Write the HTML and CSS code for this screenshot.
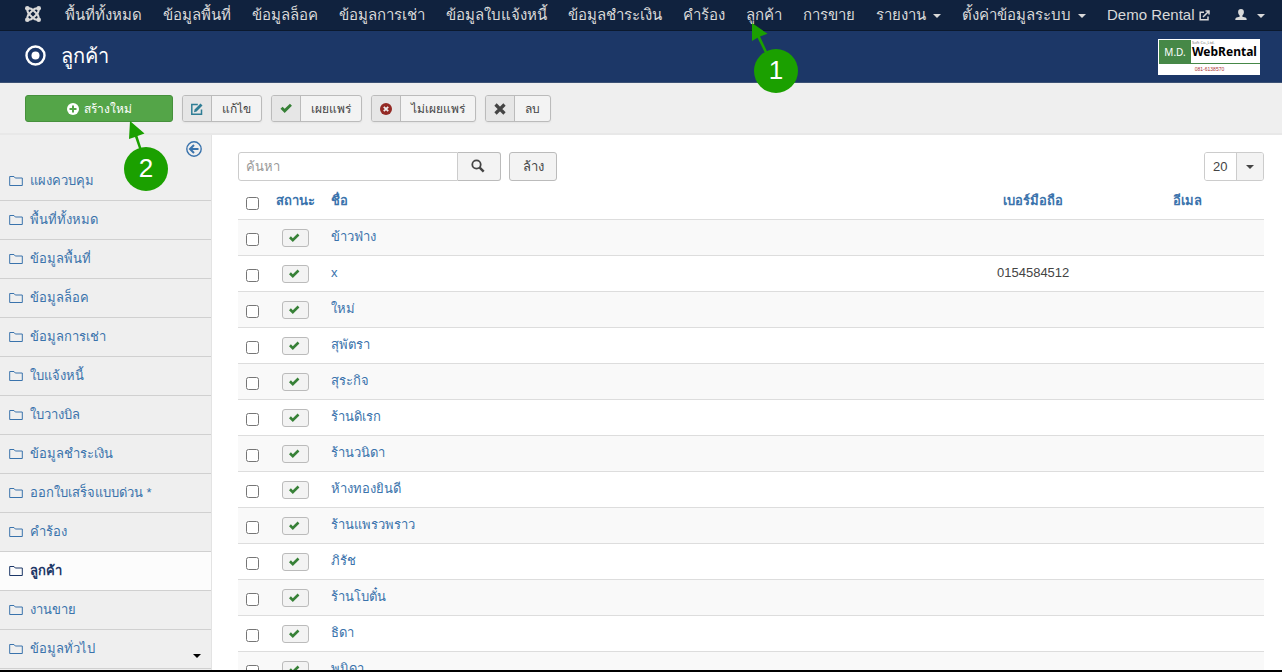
FILE: index.html
```html
<!DOCTYPE html>
<html lang="th">
<head>
<meta charset="utf-8">
<title>ลูกค้า - Demo Rental</title>
<link rel="stylesheet" href="styles.css">
</head>
<body>
<svg class="defs" aria-hidden="true">
  <symbol id="check" viewBox="0 0 12 10"><path d="M1 5.2 2.9 3.3 4.8 5.2 9.6.6 11.4 2.4 4.8 9Z"/></symbol>
  <symbol id="folder" viewBox="0 0 14 12"><path d="M.7 10.500V1.500H5l1.300 1.500h7v7.500Z" fill="none" stroke="currentColor"/></symbol>
  <symbol id="caret" viewBox="0 0 8 4"><path d="M0 0h8L4 4Z"/></symbol>
</svg>
<div class="page">
  <nav class="navbar">
    <a class="brand" href="#" aria-label="Joomla"><svg width="16" height="16" viewBox="0 0 16 16"><g fill="none" stroke="currentColor" stroke-width="2"><path d="M2.500 2.500C2 5.500 2.500 6.500 4 8l4 4c1.500 1.500 3 2 5.500 1.500"/><path d="M13.500 2.500C10.500 2 9.500 2.500 8 4L4 8c-1.500 1.500-2 3-1.500 5.500"/><path d="M2.500 2.500C5.500 2 6.500 2.500 8 4l4 4c1.500 1.500 2 3 1.500 5.500"/><path d="M13.500 2.500C14 5.500 13.500 6.500 12 8l-4 4c-1.500 1.500-3 2-5.500 1.500"/></g><circle cx="2.300" cy="2.300" r="2.300"/><circle cx="13.700" cy="2.300" r="2.300"/><circle cx="2.300" cy="13.700" r="2.300"/><circle cx="13.700" cy="13.700" r="2.300"/></svg></a>
    <a href="#">พื้นที่ทั้งหมด</a>
    <a href="#">ข้อมูลพื้นที่</a>
    <a href="#">ข้อมูลล็อค</a>
    <a href="#">ข้อมูลการเช่า</a>
    <a href="#">ข้อมูลใบแจ้งหนี้</a>
    <a href="#">ข้อมูลชำระเงิน</a>
    <a href="#">คำร้อง</a>
    <a href="#">ลูกค้า</a>
    <a href="#">การขาย</a>
    <a href="#">รายงาน<svg class="caret"><use href="#caret"/></svg></a>
    <a href="#">ตั้งค่าข้อมูลระบบ<svg class="caret"><use href="#caret"/></svg></a>
    <a href="#">Demo Rental<svg class="ext" width="11" height="11" viewBox="0 0 11 11"><path d="M5 2.200H1.200v7.600H9V6.500M4 7l5.500-5.500M6.500 1H10v3.500" fill="none" stroke="currentColor" stroke-width="1.500"/></svg></a>
    <a href="#" class="user" aria-label="User"><svg width="12" height="12" viewBox="0 0 12 12"><path d="M6 0c1.900 0 2.900 1.300 2.900 3 0 1.500-.6 2.700-1.500 3.400v1.300l3 .9c.8.3 1.300.8 1.300 2.400H.3c0-1.600.5-2.100 1.300-2.400l3-.9V6.400C3.700 5.700 3.100 4.500 3.100 3 3.100 1.300 4.100 0 6 0Z"/></svg><svg class="caret"><use href="#caret"/></svg></a>
  </nav>

  <header class="header">
    <svg width="21" height="21" viewBox="0 0 21 21"><circle cx="10.500" cy="10.500" r="9" fill="none" stroke="currentColor" stroke-width="2.400"/><circle cx="10.500" cy="10.500" r="4"/></svg>
    <h1>ลูกค้า</h1>
    <div class="logo">
      <div class="logo-top"><span class="logo-md">M.D.</span><span class="logo-name"><small>Soft Co.,Ltd.</small><b>WebRental</b></span></div>
      <div class="logo-phone">081-6138570</div>
    </div>
  </header>

  <div class="toolbar">
    <button class="btn-new"><svg width="12" height="12" viewBox="0 0 12 12"><circle cx="6" cy="6" r="6"/><path d="M6 2.500v7M2.500 6h7" stroke="#54a548" stroke-width="2"/></svg>สร้างใหม่</button>
    <button class="tool"><span class="tool-icon teal"><svg width="12" height="12" viewBox="0 0 12 12"><path d="M10.500 6.500v4.700H.8V1.500h6" fill="none" stroke="currentColor" stroke-width="1.500"/><path d="M3 9.200 3.600 6.500 9.500.6l2 2L5.600 8.500Z"/></svg></span><span class="tool-text">แก้ไข</span></button>
    <button class="tool"><span class="tool-icon green"><svg width="14" height="11"><use href="#check"/></svg></span><span class="tool-text">เผยแพร่</span></button>
    <button class="tool"><span class="tool-icon red"><svg width="12" height="12" viewBox="0 0 12 12"><circle cx="6" cy="6" r="6"/><path d="m3.800 3.800 4.400 4.400m0-4.400L3.800 8.200" stroke="#eee" stroke-width="1.800"/></svg></span><span class="tool-text">ไม่เผยแพร่</span></button>
    <button class="tool"><span class="tool-icon"><svg width="12" height="12" viewBox="0 0 12 12"><path d="m1.500 1.500 9 9m0-9-9 9" stroke="currentColor" stroke-width="3.200"/></svg></span><span class="tool-text">ลบ</span></button>
  </div>

  <div class="body">
    <aside class="sidebar">
      <button class="collapse" aria-label="ซ่อนเมนู"><svg class="outline" width="16" height="16" viewBox="0 0 16 16"><circle cx="8" cy="8" r="7.200" stroke-width="1.400"/><path d="M12.500 8H4.500M8 4 4 8l4 4" stroke-width="2"/></svg></button>
      <ul>
        <li><a href="#"><svg><use href="#folder"/></svg>แผงควบคุม</a></li>
        <li><a href="#"><svg><use href="#folder"/></svg>พื้นที่ทั้งหมด</a></li>
        <li><a href="#"><svg><use href="#folder"/></svg>ข้อมูลพื้นที่</a></li>
        <li><a href="#"><svg><use href="#folder"/></svg>ข้อมูลล็อค</a></li>
        <li><a href="#"><svg><use href="#folder"/></svg>ข้อมูลการเช่า</a></li>
        <li><a href="#"><svg><use href="#folder"/></svg>ใบแจ้งหนี้</a></li>
        <li><a href="#"><svg><use href="#folder"/></svg>ใบวางบิล</a></li>
        <li><a href="#"><svg><use href="#folder"/></svg>ข้อมูลชำระเงิน</a></li>
        <li><a href="#"><svg><use href="#folder"/></svg>ออกใบเสร็จแบบด่วน *</a></li>
        <li><a href="#"><svg><use href="#folder"/></svg>คำร้อง</a></li>
        <li class="active"><a href="#"><svg><use href="#folder"/></svg>ลูกค้า</a></li>
        <li><a href="#"><svg><use href="#folder"/></svg>งานขาย</a></li>
        <li><a href="#"><svg><use href="#folder"/></svg>ข้อมูลทั่วไป</a></li>
      </ul>
      <svg class="more"><use href="#caret"/></svg>
    </aside>

    <main class="content">
      <div class="filters">
        <div class="search">
          <input type="text" placeholder="ค้นหา" aria-label="ค้นหา">
          <button aria-label="ค้นหา"><svg class="outline" width="14" height="14" viewBox="0 0 14 14"><circle cx="5.500" cy="5.500" r="4.200" stroke-width="1.800"/><path d="m8.700 8.700 4 4" stroke-width="2.500"/></svg></button>
        </div>
        <button class="clear">ล้าง</button>
        <div class="limit"><select aria-label="จำนวนรายการ"><option>20</option></select><span class="limit-arrow"><svg class="caret"><use href="#caret"/></svg></span></div>
      </div>
      <table>
        <thead><tr><th class="c-check"><input type="checkbox" aria-label="เลือกทั้งหมด"></th><th class="c-status"><a href="#">สถานะ</a></th><th class="c-name"><a href="#">ชื่อ</a></th><th class="c-info"><a href="#">เบอร์มือถือ</a></th><th class="c-info"><a href="#">อีเมล</a></th></tr></thead>
        <tbody>
          <tr><td><input type="checkbox" aria-label="ข้าวฟ่าง"></td><td><button class="state" aria-label="เผยแพร่"><svg><use href="#check"/></svg></button></td><td><a href="#">ข้าวฟ่าง</a></td><td></td><td></td></tr>
          <tr><td><input type="checkbox" aria-label="x"></td><td><button class="state" aria-label="เผยแพร่"><svg><use href="#check"/></svg></button></td><td><a href="#">x</a></td><td>0154584512</td><td></td></tr>
          <tr><td><input type="checkbox" aria-label="ใหม่"></td><td><button class="state" aria-label="เผยแพร่"><svg><use href="#check"/></svg></button></td><td><a href="#">ใหม่</a></td><td></td><td></td></tr>
          <tr><td><input type="checkbox" aria-label="สุพัตรา"></td><td><button class="state" aria-label="เผยแพร่"><svg><use href="#check"/></svg></button></td><td><a href="#">สุพัตรา</a></td><td></td><td></td></tr>
          <tr><td><input type="checkbox" aria-label="สุระกิจ"></td><td><button class="state" aria-label="เผยแพร่"><svg><use href="#check"/></svg></button></td><td><a href="#">สุระกิจ</a></td><td></td><td></td></tr>
          <tr><td><input type="checkbox" aria-label="ร้านดิเรก"></td><td><button class="state" aria-label="เผยแพร่"><svg><use href="#check"/></svg></button></td><td><a href="#">ร้านดิเรก</a></td><td></td><td></td></tr>
          <tr><td><input type="checkbox" aria-label="ร้านวนิดา"></td><td><button class="state" aria-label="เผยแพร่"><svg><use href="#check"/></svg></button></td><td><a href="#">ร้านวนิดา</a></td><td></td><td></td></tr>
          <tr><td><input type="checkbox" aria-label="ห้างทองยินดี"></td><td><button class="state" aria-label="เผยแพร่"><svg><use href="#check"/></svg></button></td><td><a href="#">ห้างทองยินดี</a></td><td></td><td></td></tr>
          <tr><td><input type="checkbox" aria-label="ร้านแพรวพราว"></td><td><button class="state" aria-label="เผยแพร่"><svg><use href="#check"/></svg></button></td><td><a href="#">ร้านแพรวพราว</a></td><td></td><td></td></tr>
          <tr><td><input type="checkbox" aria-label="ภิรัช"></td><td><button class="state" aria-label="เผยแพร่"><svg><use href="#check"/></svg></button></td><td><a href="#">ภิรัช</a></td><td></td><td></td></tr>
          <tr><td><input type="checkbox" aria-label="ร้านโบตั๋น"></td><td><button class="state" aria-label="เผยแพร่"><svg><use href="#check"/></svg></button></td><td><a href="#">ร้านโบตั๋น</a></td><td></td><td></td></tr>
          <tr><td><input type="checkbox" aria-label="ธิดา"></td><td><button class="state" aria-label="เผยแพร่"><svg><use href="#check"/></svg></button></td><td><a href="#">ธิดา</a></td><td></td><td></td></tr>
          <tr><td><input type="checkbox" aria-label="พนิดา"></td><td><button class="state" aria-label="เผยแพร่"><svg><use href="#check"/></svg></button></td><td><a href="#">พนิดา</a></td><td></td><td></td></tr>
        </tbody>
      </table>
    </main>
  </div>

  <div class="step step-1"><svg width="16" height="32" viewBox="0 0 16 32"><path d="M0 0v18l5.500-3.300L12.500 29h2.800L8 13.500l7.500-2.800Z"/></svg><span>1</span></div>
  <div class="step step-2"><svg width="16" height="32" viewBox="0 0 16 32"><path d="M1 0 0 18l6-2 4.500 13H13L8.500 15l7-2.500Z"/></svg><span>2</span></div>
</div>
</body>
</html>
```
FILE: styles.css
```css
* { box-sizing: border-box; }
body {
  margin: 0;
  font: 13px/18px "Liberation Sans", sans-serif;
  color: #444;
  background: #fff;
}
a { color: #3a73ac; text-decoration: none; }
button, input, select { font: inherit; color: inherit; margin: 0; }
svg { fill: currentColor; flex: none; }
.outline { fill: none; stroke: currentColor; }
.defs { position: absolute; width: 0; height: 0; }
.caret { width: 8px; height: 4px; }

.page {
  position: relative;
  height: 100vh;
  display: flex;
  flex-direction: column;
  overflow: hidden;
  border-bottom: 2px solid #000;
}

.navbar {
  flex: none;
  height: 31px;
  display: flex;
  align-items: stretch;
  gap: 1px;
  padding: 0 7px 0 15px;
  background: #10223e;
  border-bottom: 1px solid #0b192e;
  font-size: 15px;
  line-height: 30px;
}
.navbar a {
  display: flex;
  align-items: center;
  padding: 0 10px;
  color: #d9d9d9;
  white-space: nowrap;
}
.navbar .brand { padding: 0 13px 2px 10px; }
.navbar .caret { margin: 2px 0 0 7px; }
.navbar .ext { margin-left: 4px; }
.navbar .user { margin-left: auto; }
.navbar .user .caret { margin-left: 10px; }

.header {
  flex: none;
  height: 52px;
  display: flex;
  align-items: center;
  padding: 0 22px 2px 25px;
  gap: 15px;
  color: #fff;
  background: #1c3767;
  border-bottom: 1px solid #3b5175;
}
.header h1 { margin: 0; font-size: 20px; line-height: 36px; font-weight: 400; }
.logo {
  width: 102px;
  height: 36px;
  margin: 2px 0 0 auto;
  padding: 1px 0 0 1px;
  background: #fff;
  color: #000;
  font-family: "Noto Sans", sans-serif;
}
.logo-top { display: flex; height: 24px; border-bottom: 1px solid #468847; }
.logo-md { width: 32px; background: #468847; color: #fff; font-size: 10px; line-height: 24px; text-align: center; }
.logo-name { display: flex; flex-direction: column; padding-left: 1px; }
.logo-name small { font-size: 4px; line-height: 6px; color: #777; }
.logo-name b { font-size: 12px; line-height: 12px; }
.logo-phone { font: 5px/10px "Liberation Sans", sans-serif; text-align: center; color: #a33; }

.toolbar {
  flex: none;
  display: flex;
  gap: 9px;
  height: 52px;
  padding: 12px 25px;
  background: #efefef;
  border-bottom: 2px solid #e8e8e8;
  font-size: 12px;
}
.toolbar button {
  display: flex;
  align-items: center;
  height: 27px;
  padding: 0;
  border: 1px solid #bbb;
  border-radius: 3px;
  overflow: hidden;
}
.toolbar .btn-new {
  width: 148px;
  justify-content: center;
  gap: 5px;
  color: #fff;
  background: #54a548;
  border-color: #46903c;
}
.toolbar .tool { background: #f3f3f3; box-shadow: 0 1px 2px rgba(0,0,0,.05); }
.tool-icon {
  align-self: stretch;
  width: 29px;
  display: flex;
  align-items: center;
  justify-content: center;
  background: #e6e6e6;
  border-right: 1px solid #bbb;
}
.tool-text { padding: 0 10px; white-space: nowrap; }
.teal { color: #2f7d95; }
.green { color: #378137; }
.red { color: #942a25; }

.body { flex: 1; min-height: 0; display: flex; }
.sidebar {
  position: relative;
  flex: none;
  width: 212px;
  background: #efefef;
  border-right: 1px solid #e3e3e3;
  overflow: hidden;
}
.collapse {
  display: block;
  margin: 6px 9px 5px auto;
  padding: 0;
  height: 16px;
  border: 0;
  background: none;
  color: #3a73ac;
}
.collapse svg { display: block; }
.sidebar ul { list-style: none; margin: 0; padding: 0; }
.sidebar a {
  display: flex;
  align-items: center;
  gap: 7px;
  height: 39px;
  padding: 0 0 1px 9px;
  border-bottom: 1px solid #d0d0d0;
}
.sidebar a svg { width: 14px; height: 12px; }
.sidebar .active a { background: #fcfcfc; color: #1c3767; font-weight: 700; }
.sidebar .more { position: absolute; right: 10px; bottom: 12px; width: 8px; height: 4px; color: #000; }

.content { flex: 1; min-width: 0; padding: 17px 18px 0 26px; overflow: hidden; }
.filters { display: flex; gap: 8px; height: 29px; }
.search { display: flex; }
.search input {
  width: 220px;
  padding: 0 7px;
  border: 1px solid #ccc;
  border-radius: 3px 0 0 3px;
}
.search input::placeholder { color: #999; }
.filters button {
  border: 1px solid #bbb;
  background: #f3f3f3;
  border-radius: 3px;
}
.filters .search button {
  display: flex;
  align-items: center;
  justify-content: center;
  width: 43px;
  padding: 0 3px 2px 0;
  border-left-width: 0;
  border-radius: 0 3px 3px 0;
}
.filters .clear { width: 48px; padding: 0; }
.limit {
  display: flex;
  width: 60px;
  margin-left: auto;
  border: 1px solid #ccc;
  border-radius: 3px;
  overflow: hidden;
}
.limit select { appearance: none; width: 31px; padding: 0 0 0 8px; border: 0; background: #fff; }
.limit-arrow {
  flex: 1;
  display: flex;
  align-items: center;
  justify-content: center;
  background: #f3f3f3;
  border-left: 1px solid #ccc;
}

table { width: 100%; margin-top: 1px; border-collapse: collapse; table-layout: fixed; }
th, td { height: 36px; padding: 8px; border-top: 1px solid #ddd; text-align: center; vertical-align: top; line-height: 18px; }
th { height: 37px; border-top: 0; padding-top: 10px; }
th:nth-child(3), td:nth-child(3) { text-align: left; }
.c-check { width: 29px; }
.c-status { width: 56px; }
.c-info { width: 15%; }
tbody tr:nth-child(odd) { background: #f9f9f9; }
table input { display: block; width: 13px; height: 13px; margin: 5px 0 0; }
th a { white-space: nowrap; }
th:nth-child(2), td:nth-child(2) { padding-left: 0; padding-right: 0; }
.state {
  display: flex;
  align-items: center;
  width: 27px;
  height: 18px;
  margin: 1px auto 0;
  padding: 0 5px;
  border: 1px solid #bbb;
  border-radius: 3px;
  background: #f3f3f3;
  color: #378137;
}
.state svg { width: 12px; height: 10px; }

/* Numbered guide markers */
.step { position: absolute; width: 44px; color: #1ba000; }
.step svg { position: absolute; }
.step span {
  display: block;
  height: 44px;
  border-radius: 50%;
  background: #1ba000;
  color: #fff;
  font-size: 26px;
  line-height: 42px;
  text-align: center;
}
.step-1 { left: 754px; top: 49px; }
.step-1 svg { left: -2px; top: -26px; }
.step-2 { left: 124px; top: 147px; }
.step-2 svg { left: 5px; top: -26px; }
```
